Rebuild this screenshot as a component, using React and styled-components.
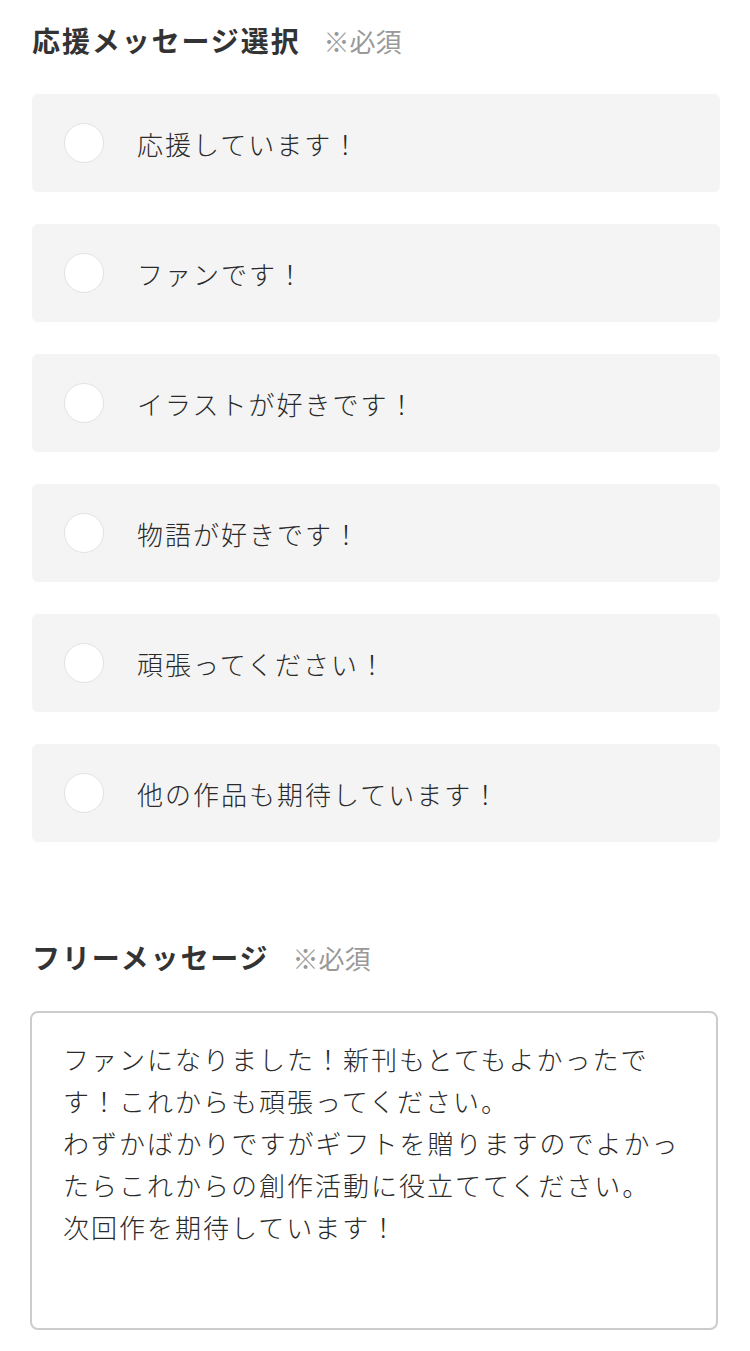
import styled, { createGlobalStyle } from 'styled-components';

const Global = createGlobalStyle`
  body {
    margin: 0;
    background: #fff;
    font-family: "Noto Sans CJK JP", "Noto Sans", sans-serif;
    color: #333;
  }
`;

const Page = styled.main`
  padding: 18px 30px 20px 32px;
`;

const Heading = styled.h2`
  display: flex;
  align-items: baseline;
  gap: 23px;
  margin: 0;
  font-size: 28px;
  font-weight: 700;
  line-height: 44px;
  letter-spacing: 1.9px;
  color: #333;
`;

const Required = styled.span`
  font-size: 26px;
  font-weight: 400;
  letter-spacing: 0;
  color: #999;
`;

const Options = styled.div`
  display: grid;
  gap: 32px;
  margin-top: 31px;
  width: 688px;
`;

const Option = styled.label`
  display: flex;
  align-items: center;
  gap: 33px;
  height: 98px;
  padding: 0 32px;
  box-sizing: border-box;
  background: #f4f4f4;
  border-radius: 6px;
  font-size: 26px;
  font-weight: 300;
  letter-spacing: 2px;
  color: #2a2a2a;
  cursor: pointer;
`;

const Radio = styled.span`
  flex: none;
  width: 38px;
  height: 38px;
  border-radius: 50%;
  background: #fff;
  border: 1px solid #e2e2e2;
`;

const FreeSection = styled.section`
  margin-top: 93px;
`;

const MessageBox = styled.div`
  margin: 31px 0 0 -2px;
  width: 688px;
  height: 319px;
  box-sizing: border-box;
  border: 2px solid #ccc;
  border-radius: 8px;
  padding: 25px 28px 0 31px;
  font-size: 26px;
  font-weight: 300;
  letter-spacing: 2px;
  line-height: 42px;
  color: #2a2a2a;
  white-space: pre-wrap;
`;

const options = [
  '応援しています！',
  'ファンです！',
  'イラストが好きです！',
  '物語が好きです！',
  '頑張ってください！',
  '他の作品も期待しています！',
];

const message =
  'ファンになりました！新刊もとてもよかったです！これからも頑張ってください。\nわずかばかりですがギフトを贈りますのでよかったらこれからの創作活動に役立ててください。\n次回作を期待しています！';

export default function App() {
  return (
    <>
      <Global />
      <Page>
        <Heading>
          応援メッセージ選択<Required>※必須</Required>
        </Heading>
        <Options>
          {options.map((text) => (
            <Option key={text}>
              <Radio />
              {text}
            </Option>
          ))}
        </Options>
        <FreeSection>
          <Heading>
            フリーメッセージ<Required>※必須</Required>
          </Heading>
          <MessageBox>{message}</MessageBox>
        </FreeSection>
      </Page>
    </>
  );
}
